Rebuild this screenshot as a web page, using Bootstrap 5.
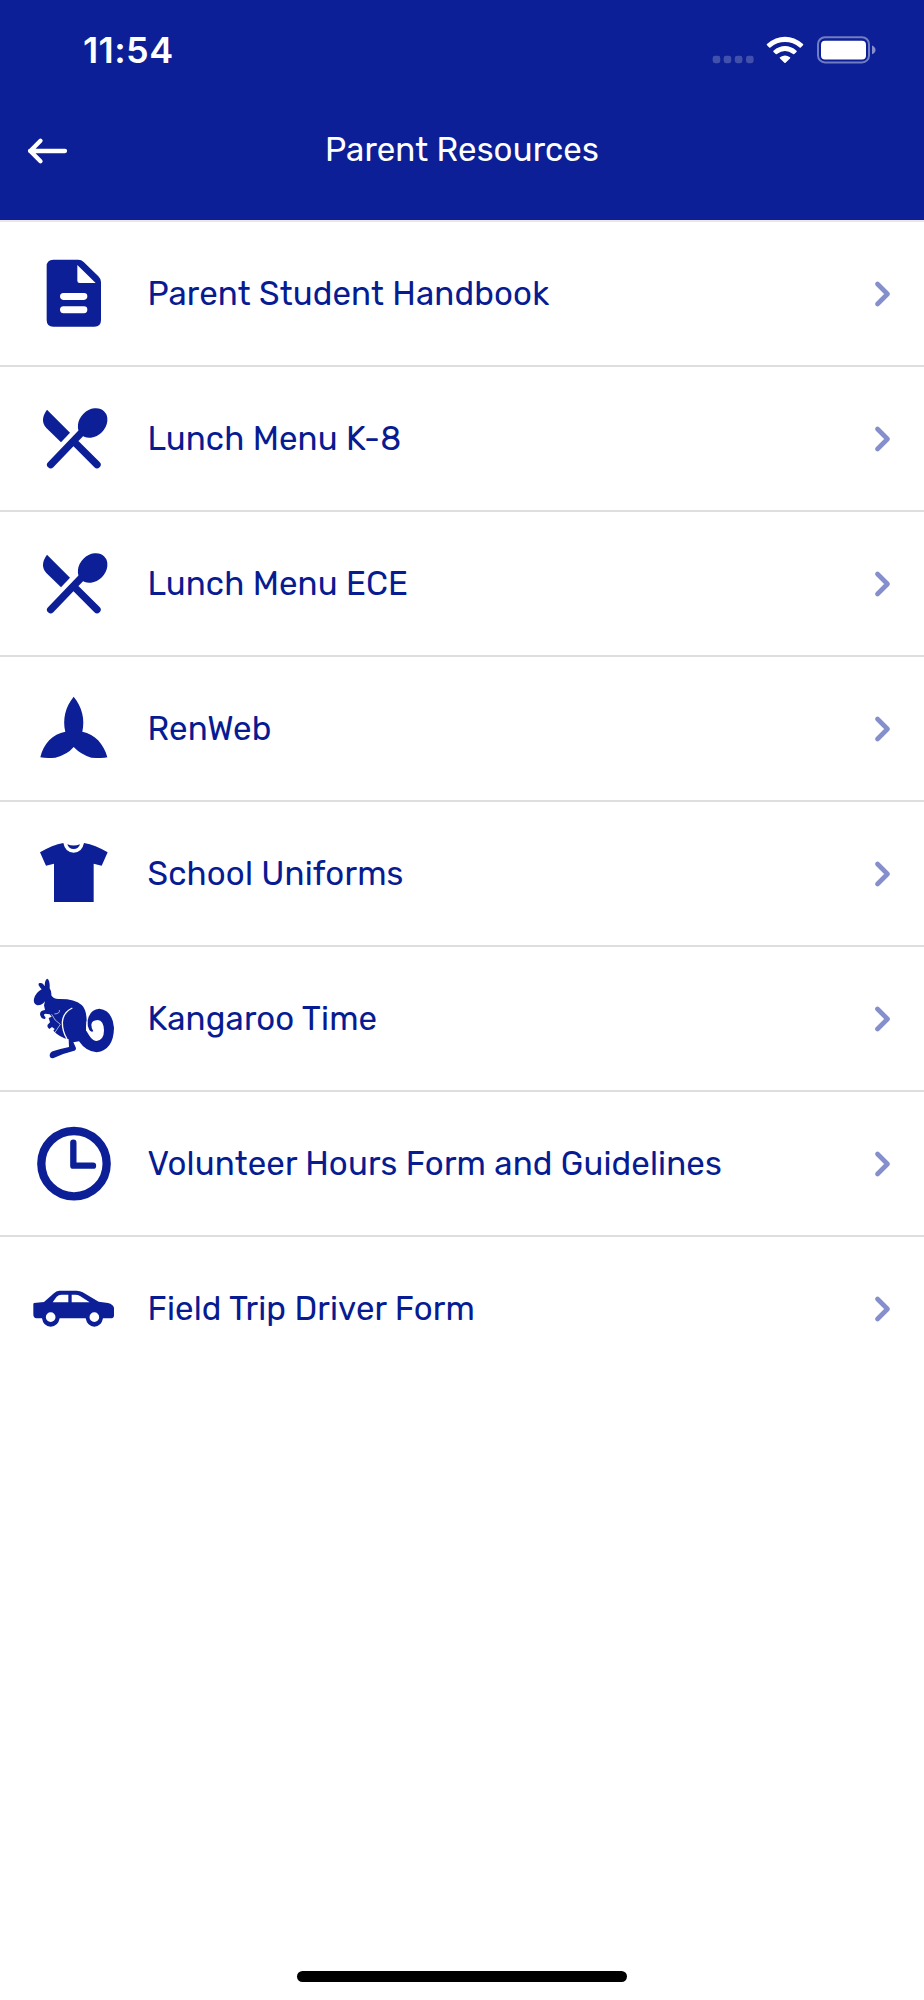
<!DOCTYPE html>
<html lang="en">
<head>
<meta charset="utf-8">
<meta name="viewport" content="width=device-width, initial-scale=1">
<title>Parent Resources</title>
<link href="https://cdn.jsdelivr.net/npm/bootstrap@5.3.0/dist/css/bootstrap.min.css" rel="stylesheet">
<style>
:root{--navy:#0c1f96}
body{font-family:Rubik,Roboto,sans-serif;background:#fff;min-height:2000px}
.top-bar{background:var(--navy);background-clip:padding-box;height:222px;border-bottom:2px solid #e9e7e9}
.status{height:100px;padding:0 48px 0 83px}
.clock{font:600 36px/1 Inter,sans-serif;letter-spacing:.4px}
.title-row{height:100px;padding:0 28px}
.title-row h1{font-size:33px;line-height:40px;letter-spacing:.13px;font-weight:400}
.resource{height:145px;border-radius:0;color:#071b92;font-size:33px;line-height:40px;letter-spacing:.14px;padding:0 32.500px 0 20px}
.list-group-flush>.resource{border:0 solid #dedede;border-width:0 0 2px}
.list-group-flush>.resource:last-child{border-width:0 0 2px;border-color:transparent}
.pic{width:120px;height:143px;fill:var(--navy);flex:none}
.chev{width:18px;height:28px;fill:none;stroke:#858fcc;stroke-width:4.7;stroke-linecap:round;stroke-linejoin:round}
.label-text{margin-left:7.500px;white-space:nowrap}
.home-bar{width:330px;height:11px;background:#000;margin-bottom:18px}
</style>
</head>
<body class="d-flex flex-column">
<header class="top-bar text-white">
  <div class="status d-flex align-items-center justify-content-between">
    <span class="clock">11:54</span>
    <svg width="166" height="30" viewBox="0 0 166 30" fill="#fff">
      <g opacity=".22"><rect x="2.7" y="20.8" width="7.6" height="7.4" rx="2.4"/><rect x="13.7" y="20.8" width="7.6" height="7.4" rx="2.4"/><rect x="24.8" y="20.8" width="7.6" height="7.4" rx="2.4"/><rect x="36" y="20.8" width="7.6" height="7.4" rx="2.4"/></g>
      <path d="M57 9Q65.500 1.800 75 1.800T93 9q.7.6 0 1.200l-2.200 2.200q-.6.5-1.200 0Q83 7 75 7t-14.600 5.400q-.6.500-1.200 0L57 10.200q-.7-.6 0-1.200zM63.500 15.700Q69 11.100 75 11.100t11.500 4.600q.6.600 0 1.200l-2.200 2.200q-.6.500-1.200 0Q79 16.100 75 16.100t-8.100 3q-.6.500-1.200 0l-2.200-2.200q-.6-.6 0-1.200zM70 22.300q5-3.800 10 0 .6.500 0 1.100l-4.400 4.400q-.6.600-1.200 0L70 23.400q-.6-.6 0-1.100z"/>
      <rect x="108" y="2.200" width="51" height="25.200" rx="7" fill="none" stroke="#fff" stroke-width="2" opacity=".42"/>
      <rect x="111" y="5.700" width="45" height="18.800" rx="4"/>
      <path opacity=".5" d="M162 10.500q3.500 1.500 3.500 4.500t-3.500 4.300z"/>
    </svg>
  </div>
  <div class="title-row position-relative d-flex align-items-center justify-content-center">
    <svg class="position-absolute start-0 ms-4" width="50" height="30" viewBox="0 0 50 30" fill="none" stroke="#fff" stroke-width="4.300" stroke-linecap="round" stroke-linejoin="round"><path d="M41 16H6M16.500 5.800 6.300 16l10.200 10.200"/></svg>
    <h1 class="m-0">Parent Resources</h1>
  </div>
</header>
<main class="list-group list-group-flush rounded-0">
  <a class="resource list-group-item d-flex align-items-center">
    <svg class="pic" viewBox="0 -24 360 429"><path fill-rule="evenodd" d="M100 89h75q9 0 16 7l44 43q8 8 8 17v114q0 20-20 20H100q-20 0-20-20V109q0-20 20-20zM172 105v47q0 7 7 7h48zM130 189q-10 1-10 10t10 11h62q10-1 10-11t-10-10zM130 229q-10 1-10 10t10 11h62q10-1 10-11t-10-10z"/></svg>
    <span class="label-text">Parent Student Handbook</span><svg class="chev ms-auto" viewBox="0 0 18 28"><path d="m3.500 4 10 10-10 10"/></svg></a>
  <a class="resource list-group-item d-flex align-items-center">
    <svg class="pic" viewBox="0 -39 360 429"><g id="cutlery"><path d="M81 89l69 69-27 29-44-43q-21-24 2-55z"/><ellipse cx="218" cy="129" rx="49" ry="39" transform="rotate(-45 218 129)"/><path d="M184 158 92 254M166 189l65 65" stroke="#0c1f96" stroke-width="22" stroke-linecap="round" fill="none"/></g></svg>
    <span class="label-text">Lunch Menu K-8</span><svg class="chev ms-auto" viewBox="0 0 18 28"><path d="m3.500 4 10 10-10 10"/></svg></a>
  <a class="resource list-group-item d-flex align-items-center">
    <svg class="pic" viewBox="0 -39 360 429"><use href="#cutlery"/></svg>
    <span class="label-text">Lunch Menu ECE</span><svg class="chev ms-auto" viewBox="0 0 18 28"><path d="m3.500 4 10 10-10 10"/></svg></a>
  <a class="resource list-group-item d-flex align-items-center">
    <svg class="pic" viewBox="0 -39 360 429"><path d="M161 80C187 112 195 148 187 185C225 193 252 222 262 262Q252 266 214 263Q183 254 161 231Q142 254 106 263Q80 266 61 262C70 222 98 191 136 185C127 148 136 111 161 80z"/></svg>
    <span class="label-text">RenWeb</span><svg class="chev ms-auto" viewBox="0 0 18 28"><path d="m3.500 4 10 10-10 10"/></svg></a>
  <a class="resource list-group-item d-flex align-items-center">
    <svg class="pic" viewBox="0 -54 360 429"><path d="M130 69q6 29 31 29t31-29q34 6 71 28l-18 40-24-6v115H102V131l-24 6-18-40q37-22 70-28z"/><path d="M142 73q19 7 38 0-4 14-19 14t-19-14z"/></svg>
    <span class="label-text">School Uniforms</span><svg class="chev ms-auto" viewBox="0 0 18 28"><path d="m3.500 4 10 10-10 10"/></svg></a>
  <a class="resource list-group-item d-flex align-items-center">
    <svg class="pic" viewBox="0 -39 360 429"><path d="M74 79Q74 59 82 56Q90 60 89 85Q95 94 94 106Q99 117 116 117Q164 116 184 134C198 146 203 169 198 211C208 228 216 243 230 243Q252 240 252 211Q251 181 233 180Q215 181 214 194Q214 206 220 214Q210 218 206 205Q199 189 206 170Q215 147 238 146Q277 150 282 203Q281 269 230 277Q198 275 177 244L160 247L168 264Q168 272 160 273Q127 281 101 294Q91 297 89 288Q89 277 98 274Q120 266 147 261L146 238Q120 233 100 212L104 207L96 201L88 207Q80 201 83 194L90 187L86 174L95 170L89 163L76 161Q70 163 73 167Q79 173 75 177Q62 177 60 163Q60 151 75 150L72 136L75 124Q66 137 52 136Q39 132 42 116Q48 97 65 88Q49 70 60 69Q69 68 74 79z"/><path d="M157 144q-28 13-30 43 0 28 14 50" fill="none" stroke="#fff" stroke-width="4"/><path d="M118 150q3 11-15 12M95 163q8 19 26 30l-16 24" fill="none" stroke="#fff" stroke-opacity=".75" stroke-width="2.500"/><path d="M201 184q-2 14-1 28" fill="none" stroke="#fff" stroke-width="3"/></svg>
    <span class="label-text">Kangaroo Time</span><svg class="chev ms-auto" viewBox="0 0 18 28"><path d="m3.500 4 10 10-10 10"/></svg></a>
  <a class="resource list-group-item d-flex align-items-center">
    <svg class="pic" viewBox="0 -54 360 429"><g fill="none" stroke="#0c1f96"><circle cx="162" cy="161" r="98" stroke-width="25"/><path d="M160 98v69h59" stroke-width="19" stroke-linecap="round" stroke-linejoin="round"/></g></svg>
    <span class="label-text">Volunteer Hours Form and Guidelines</span><svg class="chev ms-auto" viewBox="0 0 18 28"><path d="m3.500 4 10 10-10 10"/></svg></a>
  <a class="resource list-group-item d-flex align-items-center">
    <svg class="pic" viewBox="0 -99 360 429"><path fill-rule="evenodd" d="M42 99L72 96L100 71Q109 62 118 62H170Q180 62 188 67L236 95L264 99Q280 103 282 114V137Q281 145 272 145H249Q244 170 223 170T197 145H119Q114 170 92 170T66 145H50Q40 143 40 134V101zM98 97h47V74h-21q-8 0-14 6zM155 74v23h54l-29-19q-6-4-14-4zM92 127a14 14 0 1 0 0 29 14 14 0 1 0 0-29M223 127a14 14 0 1 0 0 29 14 14 0 1 0 0-29"/></svg>
    <span class="label-text">Field Trip Driver Form</span><svg class="chev ms-auto" viewBox="0 0 18 28"><path d="m3.500 4 10 10-10 10"/></svg></a>
</main>
<div class="home-bar rounded-pill mt-auto mx-auto"></div>
<script src="https://cdn.jsdelivr.net/npm/bootstrap@5.3.0/dist/js/bootstrap.bundle.min.js"></script>
</body>
</html>
